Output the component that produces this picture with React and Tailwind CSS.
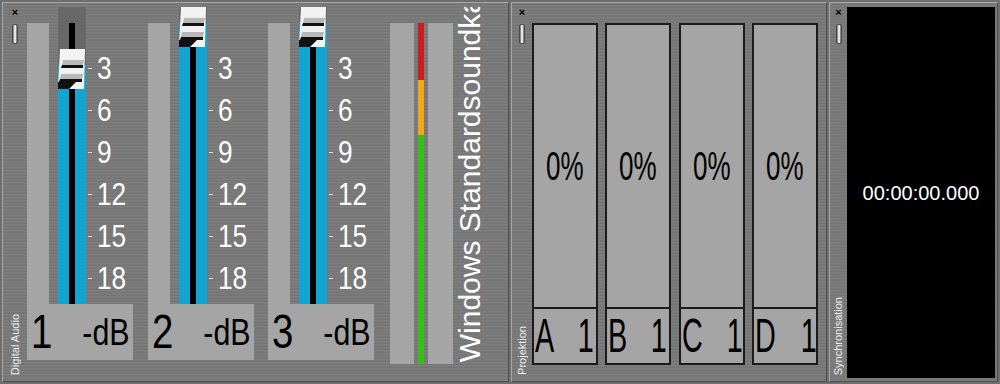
import React from "react";

const marks = ["3", "6", "9", "12", "15", "18"];

const channels = [
  { id: "1", knob: 42 },
  { id: "2", knob: 0 },
  { id: "3", knob: 0 },
];

const cells = ["A", "B", "C", "D"];

function Knob() {
  return (
    <svg width="28" height="40" viewBox="0 0 28 40" className="block">
      <polygon points="2,0 27,0 26,40 0,40" fill="#f2f2f2" />
      <polygon points="5,11 26,11 25,16 4,16" fill="#b8b8b8" />
      <polygon points="4,16 25,16 25,19 3,19" fill="#111" />
      <polygon points="3,25 25,25 24,30 2,30" fill="#b8b8b8" />
      <polygon points="2,30 24,30 24,33 1,33" fill="#111" />
      <polygon points="0,33 18,33 11,40 0,40" fill="#111" />
    </svg>
  );
}

function Fader({ knob }) {
  return (
    <div className="relative w-[28px] h-full bg-[#686868]">
      {/* blue fill below the knob */}
      <div className="absolute left-0 right-0 bottom-0 bg-[#12a5d3]" style={{ top: knob + 16 }} />
      <div className="absolute left-[11px] w-[6px] top-[16px] bottom-0 bg-black" />
      <div className="absolute left-0" style={{ top: knob }}>
        <Knob />
      </div>
    </div>
  );
}

function Grip() {
  return (
    <div className="w-[6px] h-[20px] rounded-[2px] border border-[#4a4a4a] bg-[#8a8a8a] flex justify-center">
      <div className="w-[2px] h-full bg-[#e6e6e6]" />
    </div>
  );
}

function SideStrip({ label, width }) {
  return (
    <div className={`flex flex-col items-center h-full pt-[4px] pb-[6px] ${width}`}>
      <span className="text-[11px] leading-none font-bold text-black">×</span>
      <div className="mt-[6px]">
        <Grip />
      </div>
      <div className="flex-1" />
      <span className="[writing-mode:vertical-rl] rotate-180 text-[11px] leading-none text-[#eeeeee] whitespace-nowrap">
        {label}
      </span>
    </div>
  );
}

function Channel({ id, knob }) {
  return (
    <div className="flex flex-col w-[106px]">
      <div className="flex h-[297px]">
        <div className="w-[26px] mt-[16px] bg-[#a5a5a5]" />
        <div className="ml-[9px] h-full">
          <Fader knob={knob} />
        </div>
        <div className="flex flex-col pt-[40px]">
          {marks.map((m) => (
            <div key={m} className="h-[42px] flex items-center text-white">
              <span className="w-[4px] h-[1px] bg-[#dddddd] ml-[2px] mr-[5px]" />
              <span className="text-[32px] leading-none inline-block origin-left scale-x-[0.82]">{m}</span>
            </div>
          ))}
        </div>
      </div>
      <div className="h-[56px] bg-[#a5a5a5] flex items-center text-black">
        <span className="ml-[4px] text-[48px] leading-none inline-block origin-left scale-x-[0.8]">{id}</span>
        <span className="ml-auto mr-[3px] text-[37px] leading-none inline-block origin-right scale-x-[0.82]">-dB</span>
      </div>
    </div>
  );
}

export default function App() {
  return (
    <div className="w-[1000px] h-[384px] p-[2px] flex gap-[2px] font-['Liberation_Sans',Arial,sans-serif] bg-[#6e6e6e] overflow-hidden">
      {/* Digital Audio */}
      <div className="w-[507px] h-full flex border border-t-[#a8a8a8] border-l-[#a8a8a8] border-b-[#4e4e4e] border-r-[#4e4e4e] bg-[repeating-linear-gradient(180deg,#7a7a7a_0px,#7a7a7a_1px,#757575_1px,#757575_2px,#7d7d7d_2px,#7d7d7d_3px)]">
        <SideStrip label="Digital Audio" width="w-[24px]" />
        <div className="flex pt-[4px] h-[361px] gap-[14.5px]">
          {channels.map((c) => (
            <Channel key={c.id} {...c} />
          ))}
          <div className="flex pt-[16px] h-full gap-[4px] ml-[1px]">
            <div className="w-[24px] bg-[#a5a5a5]" />
            <div className="w-[6px] flex flex-col">
              <div className="h-[57px] bg-[#c8201e]" />
              <div className="h-[55px] bg-[#f0a818]" />
              <div className="flex-1 bg-[#34c016]" />
            </div>
            <div className="w-[25px] bg-[#a5a5a5]" />
          </div>
          <div className="flex flex-col justify-end overflow-hidden h-full w-[30px] -ml-[12px] pb-[2px]">
            <span className="shrink-0 [writing-mode:vertical-rl] rotate-180 whitespace-nowrap text-[30px] leading-none text-white">
              Windows Standardsoundkarte
            </span>
          </div>
        </div>
      </div>

      {/* Projektion */}
      <div className="w-[316px] h-full flex border border-t-[#a8a8a8] border-l-[#a8a8a8] border-b-[#4e4e4e] border-r-[#4e4e4e] bg-[repeating-linear-gradient(180deg,#7a7a7a_0px,#7a7a7a_1px,#757575_1px,#757575_2px,#7d7d7d_2px,#7d7d7d_3px)]">
        <SideStrip label="Projektion" width="w-[20px]" />
        <div className="flex gap-[7.33px] pt-[20px] h-[362px]">
          {cells.map((c) => (
            <div key={c} className="w-[66px] h-full flex flex-col border-2 border-[#1c1c1c] bg-[#a5a5a5]">
              <div className="flex-1 flex items-center justify-center text-black">
                <span className="text-[40px] leading-none inline-block scale-x-[0.65]">0%</span>
              </div>
              <div className="h-[56px] border-t-2 border-[#1c1c1c] flex items-center text-black">
                <span className="ml-[1px] text-[48px] leading-none inline-block origin-left scale-x-[0.6]">{c}</span>
                <span className="ml-auto mr-[3px] text-[48px] leading-none inline-block origin-right scale-x-[0.6]">1</span>
              </div>
            </div>
          ))}
        </div>
      </div>

      {/* Synchronisation */}
      <div className="w-[169px] h-full flex border border-t-[#a8a8a8] border-l-[#a8a8a8] border-b-[#4e4e4e] border-r-[#4e4e4e] bg-[repeating-linear-gradient(180deg,#7a7a7a_0px,#7a7a7a_1px,#757575_1px,#757575_2px,#7d7d7d_2px,#7d7d7d_3px)]">
        <SideStrip label="Synchronisation" width="w-[17px]" />
        <div className="flex-1 mt-[4px] mb-[3px] mr-[2px] bg-black flex items-center justify-center">
          <span className="text-white text-[20px] leading-none">00:00:00.000</span>
        </div>
      </div>
    </div>
  );
}
